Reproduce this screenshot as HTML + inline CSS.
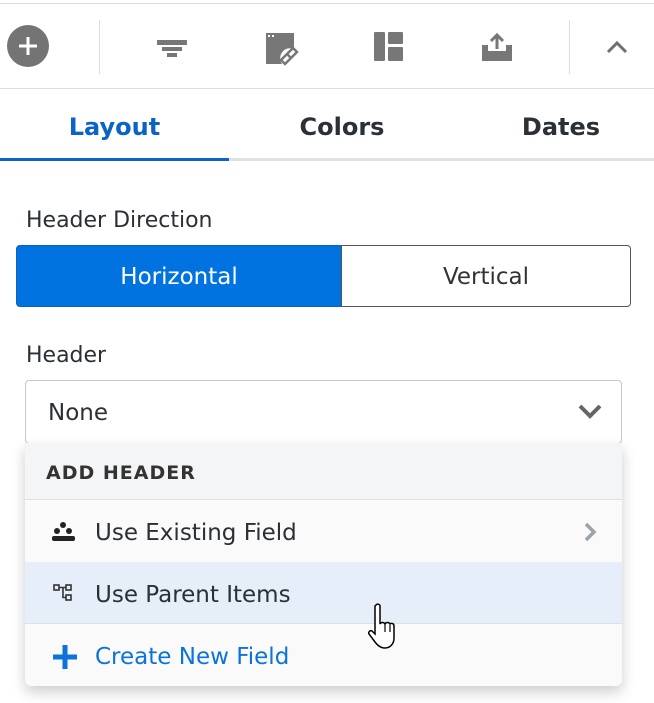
<!DOCTYPE html>
<html><head><style>
*{box-sizing:border-box;margin:0;padding:0}
body{width:654px;height:703px;background:#fff;font-family:"DejaVu Sans","Liberation Sans",sans-serif;position:relative;overflow:hidden;color:#2b2f36}
.abs{position:absolute}
</style></head><body>
<div class="abs" style="left:0;top:3px;width:654px;height:1px;background:#ddd"></div>
<div class="abs" style="left:0;top:88px;width:654px;height:1px;background:#ddd"></div>
<div class="abs" style="left:99px;top:20px;width:1px;height:54px;background:#ddd"></div>
<div class="abs" style="left:569px;top:20px;width:1px;height:54px;background:#ddd"></div>
<svg class="abs" style="left:0;top:0" width="654" height="88">
<ellipse cx="28" cy="46" rx="21" ry="21" fill="#747474"/>
<path d="M28 37v18M19 46h18" stroke="#fff" stroke-width="3"/>
<g fill="#777">
<rect x="157" y="40" width="30" height="5"/><rect x="162" y="47" width="20" height="4"/><rect x="167" y="53" width="10" height="4"/>
<path d="M266 33h28v16a10 10 0 0 0-12 15h-16z"/>
<rect x="268" y="35" width="2" height="2" fill="#fff"/><rect x="272" y="35" width="2" height="2" fill="#fff"/>
<path d="M287 54l6-6 4 4-6 6zM281 60l6-6 4 4-6 6z" fill="none" stroke="#777" stroke-width="2.5"/>
<rect x="374" y="32" width="11" height="29" rx="1"/><rect x="388" y="32" width="15" height="12" rx="1"/><rect x="388" y="47" width="15" height="14" rx="1"/>
<path d="M482 45h6v6h18v-6h6v16h-30z"/>
<path d="M497 49v-14M491 41l6-6 6 6" fill="none" stroke="#777" stroke-width="3"/>
<path d="M608 52l9-9 9 9" fill="none" stroke="#6f6f6f" stroke-width="3"/>
</g></svg>
<div class="abs" style="left:0;top:113px;width:229px;text-align:center;font-size:24px;color:#0b63c5;font-weight:600">Layout</div>
<div class="abs" style="left:229px;top:113px;width:226px;text-align:center;font-size:24px;font-weight:600">Colors</div>
<div class="abs" style="left:455px;top:113px;width:212px;text-align:center;font-size:24px;font-weight:600">Dates</div>
<div class="abs" style="left:0;top:158px;width:654px;height:3px;background:#dfe1e4"></div>
<div class="abs" style="left:0;top:158px;width:229px;height:3px;background:#0b63c5"></div>
<div class="abs" style="left:26px;top:208px;font-size:22px">Header Direction</div>
<div class="abs" style="left:16px;top:245px;width:326px;height:62px;background:#0073e0;border:1px solid #0a62c0;border-radius:4px 0 0 4px;color:#fff;font-size:23px;text-align:center;line-height:62px">Horizontal</div>
<div class="abs" style="left:341px;top:245px;width:290px;height:62px;border:1px solid #555;border-radius:0 4px 4px 0;font-size:23px;text-align:center;line-height:62px;color:#333">Vertical</div>
<div class="abs" style="left:26px;top:343px;font-size:22px">Header</div>
<div class="abs" style="left:25px;top:380px;width:597px;height:64px;border:1px solid #c8c8c8;border-radius:4px;font-size:23px;line-height:64px;padding-left:22px">None</div>
<svg class="abs" style="left:577px;top:402px" width="28" height="18"><path d="M3 4l10 10 10-10" fill="none" stroke="#666" stroke-width="4"/></svg>
<div class="abs" style="left:25px;top:443px;width:597px;height:243px;background:#fafafa;border-radius:0 0 6px 6px;box-shadow:0 6px 14px rgba(0,0,0,.2);overflow:hidden">
<div style="height:57px;background:#f4f5f7;border-bottom:1px solid #dde0e4;font-size:19px;font-weight:600;letter-spacing:1px;line-height:60px;padding-left:21px;color:#333">ADD HEADER</div>
<div style="height:62px;font-size:23px;line-height:66px;padding-left:70px;position:relative">Use Existing Field
<svg style="position:absolute;left:25px;top:21px" width="28" height="22"><circle cx="13" cy="4" r="3" fill="#222"/><circle cx="7" cy="10" r="3" fill="#222"/><circle cx="19" cy="10" r="3" fill="#222"/><rect x="2" y="15" width="23" height="5" rx="2" fill="#222"/></svg>
<svg style="position:absolute;left:558px;top:21px" width="16" height="22"><path d="M3 3l8 8-8 8" fill="none" stroke="#9aa3ab" stroke-width="3.5"/></svg></div>
<div style="height:62px;background:#e6eff9;border-bottom:1px solid #dde0e4;font-size:23px;line-height:66px;padding-left:70px;position:relative">Use Parent Items
<svg style="position:absolute;left:28px;top:22px" width="22" height="20" fill="none" stroke="#333" stroke-width="1.6"><rect x="1" y="1" width="5" height="5"/><rect x="13" y="1" width="5" height="5"/><rect x="13" y="11" width="5" height="5"/><path d="M6 3.5h7M10 3.5v10h3"/></svg></div>
<div style="height:62px;font-size:23px;line-height:66px;padding-left:70px;color:#0b73d9;position:relative">Create New Field
<svg style="position:absolute;left:27px;top:20px" width="26" height="26"><path d="M13 1v24M1 13h24" stroke="#0b73d9" stroke-width="5"/></svg></div>
</div>
<svg class="abs" style="left:366px;top:602px" width="36" height="48"><path d="M10 3c2-2 4 0 4 1v18c1-2 4-2 5 0 1-2 4-2 5 0 1-1 4-1 4 2v12c0 6-4 10-9 10-4 0-7-2-10-6l-6-8c-1-2 1-4 3-3l3 3V4z" fill="#fff" stroke="#000" stroke-width="1.5"/><path d="M19 22v8M24 23v7" stroke="#000" stroke-width="1.2"/></svg>
</body></html>
